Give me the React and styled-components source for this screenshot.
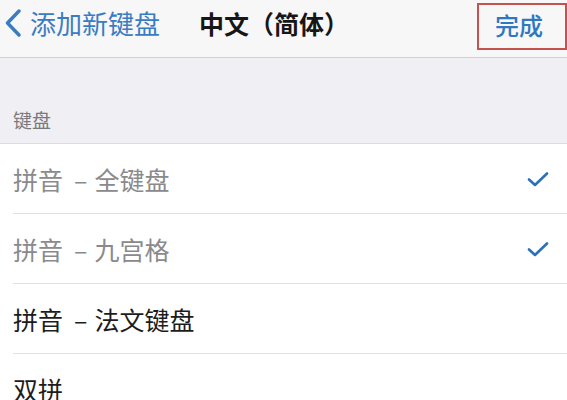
import React from "react";
import styled, { createGlobalStyle } from "styled-components";

const Global = createGlobalStyle`
  html, body { margin: 0; padding: 0; background: #ffffff; }
  body { font-family: "Noto Sans CJK SC", "Noto Sans", sans-serif; }
  * { box-sizing: border-box; }
`;

const Page = styled.div`
  width: 567px;
  height: 400px;
  overflow: hidden;
  background: #ffffff;
`;

const NavBar = styled.div`
  display: flex;
  align-items: flex-start;
  height: 58px;
  background: #f7f7f8;
  border-bottom: 1px solid #cfcfd3;
`;

const BackButton = styled.div`
  display: flex;
  align-items: center;
  gap: 8px;
  margin-top: 9px;
  margin-left: 4px;
  height: 28px;
  color: #3a7cc2;
  font-size: 26px;
  line-height: 28px;
`;

const Title = styled.div`
  margin-top: 9px;
  margin-left: 39px;
  font-size: 25px;
  line-height: 28px;
  font-weight: 700;
  color: #161616;
`;

const Spacer = styled.div`
  flex: 1;
`;

const DoneButton = styled.div`
  margin-top: 3px;
  width: 90px;
  height: 47px;
  border: 2px solid #c4524f;
  padding-top: 6px;
  padding-left: 16px;
  font-size: 24px;
  line-height: 28px;
  font-weight: 500;
  color: #2f78c0;
`;

const SectionHeader = styled.div`
  display: flex;
  align-items: flex-end;
  height: 86px;
  padding: 0 0 12px 13px;
  background: #efeff4;
  border-bottom: 1px solid #dcdce0;
  color: #7a7a7e;
  font-size: 19px;
  line-height: 22px;
`;

const List = styled.div`
  background: #ffffff;
`;

const Row = styled.div`
  display: flex;
  align-items: center;
  height: 70px;
  margin-left: 13px;
  padding-right: 18px;
  border-bottom: 1px solid #e2e2e6;
  font-size: 25px;
  line-height: 30px;
  color: ${(p) => (p.$muted ? "#8a8a8c" : "#1c1c1c")};
`;

const Label = styled.span`
  flex: 1;
`;

const Dash = styled.span`
  margin: 0 7px 0 11px;
`;

const Check = () => (
  <svg width="22" height="16" viewBox="0 0 22 16">
    <path
      d="M2 8.5 L8 14 L20 2.5"
      fill="none"
      stroke="#2b70b8"
      strokeWidth="2.6"
      strokeLinecap="round"
      strokeLinejoin="round"
    />
  </svg>
);

const Chevron = () => (
  <svg width="18" height="28" viewBox="0 0 18 28">
    <path
      d="M15 2 L3.5 14 L15 26"
      fill="none"
      stroke="#3a7cc2"
      strokeWidth="3.4"
      strokeLinecap="round"
      strokeLinejoin="round"
    />
  </svg>
);

const items = [
  { pre: "拼音", post: "全键盘", muted: true, checked: true },
  { pre: "拼音", post: "九宫格", muted: true, checked: true },
  { pre: "拼音", post: "法文键盘", muted: false, checked: false },
  { pre: "双拼", post: null, muted: false, checked: false },
];

export default function App() {
  return (
    <Page>
      <Global />
      <NavBar>
        <BackButton>
          <Chevron />
          <span>添加新键盘</span>
        </BackButton>
        <Title>中文（简体）</Title>
        <Spacer />
        <DoneButton>完成</DoneButton>
      </NavBar>
      <SectionHeader>键盘</SectionHeader>
      <List>
        {items.map((it, i) => (
          <Row key={i} $muted={it.muted}>
            <Label>
              {it.pre}
              {it.post && (
                <>
                  <Dash>–</Dash>
                  {it.post}
                </>
              )}
            </Label>
            {it.checked && <Check />}
          </Row>
        ))}
      </List>
    </Page>
  );
}
